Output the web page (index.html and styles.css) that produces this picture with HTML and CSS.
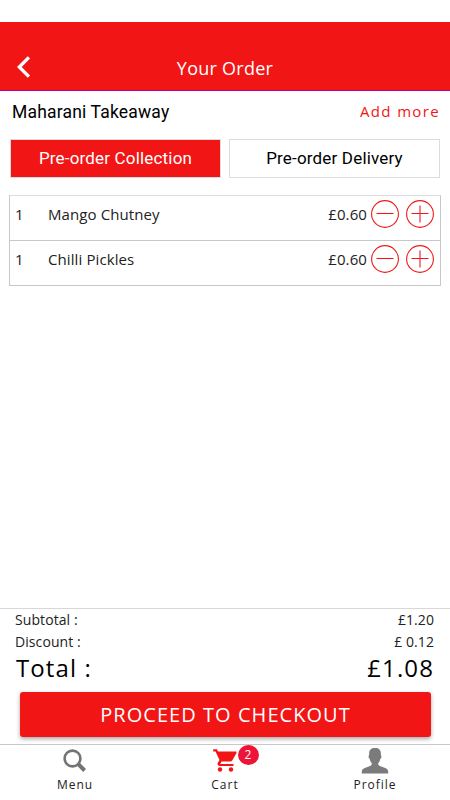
FILE: index.html
```html
<!DOCTYPE html>
<html lang="en">
<head>
<meta charset="utf-8">
<title>Your Order</title>
<link rel="stylesheet" href="styles.css">
</head>
<body>
<div class="app">
  <header class="header">
    <svg class="back" width="14" height="22" viewBox="0 0 14 22"><path d="M11.9 1.3 2.3 11l9.6 9.7" fill="none" stroke="#fff" stroke-width="3.3"/></svg>
    <h1 class="title">Your Order</h1>
  </header>
  <main class="main">
    <div class="shop">
      <span class="shop-name">Maharani Takeaway</span>
      <a class="add">Add more</a>
    </div>
    <div class="tabs">
      <button class="tab tab-active">Pre-order Collection</button>
      <button class="tab">Pre-order Delivery</button>
    </div>
    <ul class="items">
      <li class="item">
        <span class="qty">1</span><span class="name">Mango Chutney</span><span class="price">£0.60</span>
        <svg class="round" width="28" height="28" viewBox="0 0 28 28"><circle cx="14" cy="14" r="13.4"/><path d="M5.5 13.5h17"/></svg>
        <svg class="round" width="28" height="28" viewBox="0 0 28 28"><circle cx="14" cy="14" r="13.4"/><path d="M5.5 13.5h17M14 5.5v17"/></svg>
      </li>
      <li class="item">
        <span class="qty">1</span><span class="name">Chilli Pickles</span><span class="price">£0.60</span>
        <svg class="round" width="28" height="28" viewBox="0 0 28 28"><circle cx="14" cy="14" r="13.4"/><path d="M5.5 13.5h17"/></svg>
        <svg class="round" width="28" height="28" viewBox="0 0 28 28"><circle cx="14" cy="14" r="13.4"/><path d="M5.5 13.5h17M14 5.5v17"/></svg>
      </li>
    </ul>
  </main>
  <section class="summary">
    <div class="line"><span>Subtotal :</span><span>£1.20</span></div>
    <div class="line"><span>Discount :</span><span>£ 0.12</span></div>
    <div class="line total"><span>Total :</span><span>£1.08</span></div>
    <button class="checkout">PROCEED TO CHECKOUT</button>
  </section>
  <nav class="nav">
    <a class="nav-item">
      <svg class="icon" width="26" height="26" viewBox="0 0 26 26"><circle cx="10.5" cy="10.5" r="7.9" fill="none" stroke="#747474" stroke-width="2.6"/><path d="m15.8 15.7 6.8 6.8" stroke="#747474" stroke-width="4"/></svg>
      <span class="label">Menu</span>
    </a>
    <a class="nav-item">
      <span class="cart">
        <svg class="icon" width="26" height="26" viewBox="0 0 26 26"><path d="M1.2 1.2v2.2h2.3l4 8.6-1.7 2.8c-.8 1.5.3 3.1 1.7 3.1h14v-2H8.3l1.2-2.4h8.8c.8 0 1.5-.4 1.9-1.1l4.2-7.2c.4-.8-.1-1.6-.9-1.6H6L4.9 1.2z" fill="#f21515"/><circle cx="8" cy="21.5" r="2.2" fill="#f21515"/><circle cx="19" cy="21.5" r="2.2" fill="#f21515"/></svg>
        <span class="badge">2</span>
      </span>
      <span class="label">Cart</span>
    </a>
    <a class="nav-item">
      <svg class="icon" width="28" height="26" viewBox="0 0 28 26"><path d="M.8 25.5c-.2-3.6.5-4.4 3-5.4l5.3-2c1.3-.6 1.7-1.2 1.7-2.8-1.2-1.3-1.8-2.6-2-4.3-.9-.3-1.2-1.4-1.2-2.7 0-.6.2-1 .6-1.2C7.7 2.6 9.5.1 14 .1s6.3 2.5 5.8 7c.4.2.6.6.6 1.2 0 1.3-.3 2.4-1.2 2.7-.2 1.7-.8 3-2 4.3 0 1.6.4 2.2 1.7 2.8l5.3 2c2.5 1 3.2 1.8 3 5.4z" fill="#7b7b7b"/></svg>
      <span class="label">Profile</span>
    </a>
  </nav>
</div>
</body>
</html>
```
FILE: styles.css
```css
* { box-sizing: border-box; }
body { margin: 0; background: #fff; color: #000; font-family: "Open Sans", sans-serif; }
button { font: inherit; padding: 0; border: 0; }
.app { width: 450px; height: 800px; padding-top: 22px; display: flex; flex-direction: column; overflow: hidden; }
.header { height: 69px; background: #f21515; border-bottom: 1px solid #b400a8; display: grid; grid-template-columns: 48px 1fr 48px; align-items: center; padding-top: 22px; }
.back { margin-left: 17px; }
.title { margin: 1px 0 0; text-align: center; font-size: 18px; font-weight: 400; letter-spacing: .25px; line-height: 24px; color: #fff; }
.main { flex: 1; padding: 0 9px; }
.shop { height: 48px; padding: 0 1px 7px 3px; display: flex; justify-content: space-between; align-items: center; }
.shop-name { font-family: Roboto, sans-serif; font-size: 17.5px; letter-spacing: .18px; }
.add { margin: -1px 0 0; padding-bottom: 1px; color: #f21515; font-size: 15px; letter-spacing: 1.35px; }
.tabs { display: grid; grid-template-columns: 211px 211px; justify-content: space-between; padding: 0 1px; }
.tab { height: 39px; border: 1px solid #dcdcdc; background: #fff; color: #000; font-family: Roboto, sans-serif; font-size: 17px; letter-spacing: .18px; padding-bottom: 2px; }
.tab-active { background: #f21515; color: #fff; }
.items { list-style: none; margin: 17px 0 0; padding: 0; border: 1px solid #c8c8c8; border-top-color: #ddd; }
.item { height: 44px; display: flex; align-items: center; padding: 0 6px 8px 5px; font-size: 15px; color: #222; letter-spacing: .1px; }
.item + .item { height: 45px; border-top: 1px solid #c8c8c8; }
.qty { width: 33px; }
.name { flex: 1; }
.price { margin-right: 5px; }
.round { margin-left: -1px; fill: none; stroke: #f01818; stroke-width: 1.1; }
.round + .round { margin-left: 7px; }
.summary { height: 136px; border-top: 1px solid #d8d8d8; }
.line { display: flex; justify-content: space-between; height: 22px; line-height: 22px; padding: 0 16px 0 15px; font-size: 14px; color: #222; letter-spacing: .08px; }
.total { height: 32px; line-height: 30px; padding-left: 16px; font-size: 24px; color: #000; letter-spacing: 1.1px; }
.checkout { display: block; width: 411px; height: 45px; margin: 7px 0 0 20px; border-radius: 3px; background: #f21515; color: #fff; font-size: 20px; letter-spacing: 1.05px; box-shadow: 0 2px 4px rgba(0,0,0,.35); }
.nav { height: 56px; border-top: 1px solid #c8c8c8; display: grid; grid-template-columns: repeat(3, 1fr); }
.nav-item { display: flex; flex-direction: column; align-items: center; padding-top: 3px; }
.icon { display: block; }
.cart { position: relative; }
.label { margin-top: 2px; font-size: 12px; line-height: 17px; color: #222; letter-spacing: 1px; }
.badge { position: absolute; left: 25.5px; top: -3px; width: 21px; height: 20px; border-radius: 50%; background: #ed1437; color: #fff; font-size: 12px; line-height: 20px; text-align: center; }
```
